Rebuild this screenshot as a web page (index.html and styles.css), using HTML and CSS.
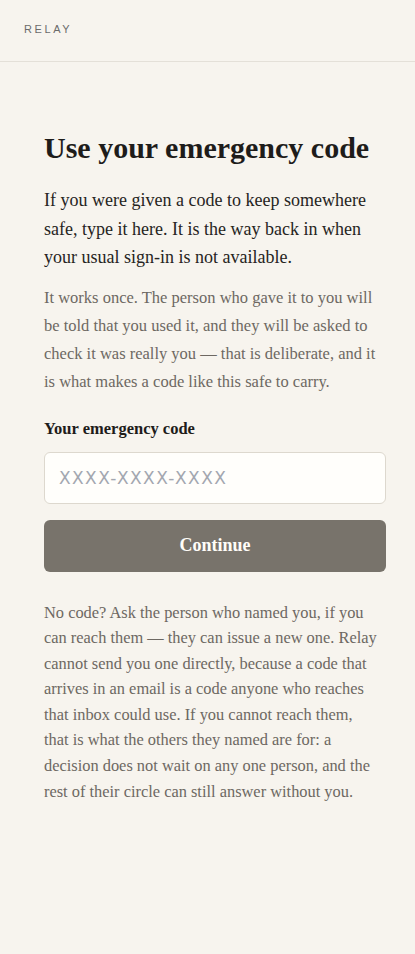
FILE: index.html
```html
<!DOCTYPE html>
<html lang="en">
<head>
<meta charset="utf-8">
<title>Relay — Use your emergency code</title>
<link rel="stylesheet" href="styles.css">
</head>
<body>
<header class="topbar">
  <span class="brand">RELAY</span>
</header>
<main class="page">
  <h1 class="title">Use your emergency code</h1>
  <p class="lead">If you were given a code to keep somewhere safe, type it here. It is the way back in when your usual sign-in is not available.</p>
  <p class="note">It works once. The person who gave it to you will be told that you used it, and they will be asked to check it was really you — that is deliberate, and it is what makes a code like this safe to carry.</p>
  <form class="form">
    <label class="label" for="code">Your emergency code</label>
    <input class="input" id="code" type="text" placeholder="XXXX-XXXX-XXXX">
    <button class="button" type="button">Continue</button>
  </form>
  <p class="help">No code? Ask the person who named you, if you can reach them — they can issue a new one. Relay cannot send you one directly, because a code that arrives in an email is a code anyone who reaches that inbox could use. If you cannot reach them, that is what the others they named are for: a decision does not wait on any one person, and the rest of their circle can still answer without you.</p>
</main>
</body>
</html>
```
FILE: styles.css
```css
* { box-sizing: border-box; }
html, body { margin: 0; padding: 0; }
body {
  background: #f7f4ee;
  font-family: "Liberation Serif", "DejaVu Serif", serif;
  color: #222;
  min-height: 954px;
}
.topbar {
  height: 62px;
  display: flex;
  align-items: center;
  padding: 0 24px;
  border-bottom: 1px solid #e4e0d8;
}
.brand {
  font-family: "Liberation Sans", Arial, sans-serif;
  font-size: 11px;
  letter-spacing: 2.6px;
  color: #6b6b6b;
  margin-top: -4px;
}
.page {
  padding: 68px 29px 0 44px;
}
.title {
  margin: 0 0 20px;
  font-size: 30px;
  line-height: 36px;
  font-weight: 700;
  color: #1e1c1a;
}
.lead {
  margin: 0 0 12px;
  font-size: 18px;
  line-height: 28.5px;
  color: #262422;
}
.note {
  margin: 0 0 22px;
  font-size: 16.5px;
  line-height: 28px;
  color: #6d6862;
}
.form {
  display: flex;
  flex-direction: column;
  margin: 0 0 28px;
}
.label {
  font-size: 16.5px;
  font-weight: 700;
  color: #1e1c1a;
  line-height: 22px;
  margin-bottom: 12px;
}
.input {
  height: 52px;
  border: 1px solid #ddd8ce;
  border-radius: 6px;
  background: #fffefb;
  padding: 0 14px;
  font-family: "DejaVu Sans", sans-serif;
  font-size: 17px;
  letter-spacing: 1.4px;
  color: #222;
  margin-bottom: 16px;
}
.input::placeholder { color: #a3a7b0; }
.button {
  height: 52px;
  border: 0;
  border-radius: 6px;
  background: #78736b;
  color: #fffdf8;
  font-family: "Liberation Serif", "DejaVu Serif", serif;
  font-size: 18px;
  font-weight: 700;
}
.help {
  margin: 0;
  max-width: 336px;
  font-size: 16.4px;
  line-height: 25.6px;
  color: #6d6862;
}
```
